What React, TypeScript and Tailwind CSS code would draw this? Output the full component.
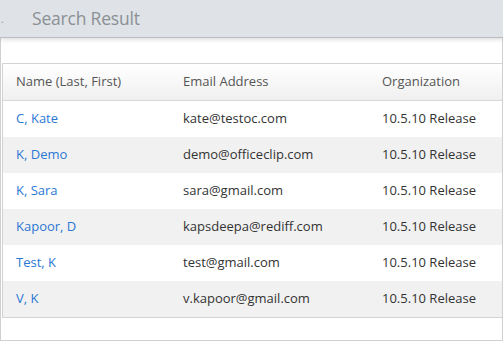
import React from 'react';

const rows = [
  { name: 'C, Kate', email: 'kate@testoc.com', org: '10.5.10 Release' },
  { name: 'K, Demo', email: 'demo@officeclip.com', org: '10.5.10 Release' },
  { name: 'K, Sara', email: 'sara@gmail.com', org: '10.5.10 Release' },
  { name: 'Kapoor, D', email: 'kapsdeepa@rediff.com', org: '10.5.10 Release' },
  { name: 'Test, K', email: 'test@gmail.com', org: '10.5.10 Release' },
  { name: 'V, K', email: 'v.kapoor@gmail.com', org: '10.5.10 Release' },
];

export default function App() {
  return (
    <div className="w-[503px] h-[341px] bg-white overflow-hidden font-['Open_Sans',sans-serif] text-[13px]">
      {/* Header */}
      <div className="h-[38px] bg-[#dfe3e7] border-b border-[#b9bdc1] shadow-[0_2px_4px_rgba(0,0,0,0.12)] flex items-center relative">
        <span className="absolute left-[1px] top-[12px] text-[#8b9095] text-[10px]">.</span>
        <span className="pl-[32px] text-[17.5px] text-[#8b9095] tracking-[-0.2px]">Search Result</span>
      </div>

      {/* Body */}
      <div className="h-[303px] border-l border-r border-b border-[#d0d0d0] pt-[25px] pl-[1px]">
        <div className="border border-[#d3d3d3] border-r-0 border-b-0">
          <div className="h-[37px] flex items-center border-b border-[#d8d8d8] bg-gradient-to-b from-white to-[#f0f0f0] text-[#555]">
            <div className="w-[180px] pl-[13px]">Name (Last, First)</div>
            <div className="w-[199px]">Email Address</div>
            <div className="flex-1">Organization</div>
          </div>
          <div className="border-b border-[#d3d3d3]">
            {rows.map((r, i) => (
              <div
                key={r.name}
                className={`h-[36px] flex items-center ${i % 2 === 1 ? 'bg-[#f1f1f1]' : 'bg-white'}`}
              >
                <div className="w-[180px] pl-[13px] text-[#2b78d4]">{r.name}</div>
                <div className="w-[199px] text-[#333]">{r.email}</div>
                <div className="flex-1 text-[#333]">{r.org}</div>
              </div>
            ))}
          </div>
        </div>
      </div>
    </div>
  );
}
